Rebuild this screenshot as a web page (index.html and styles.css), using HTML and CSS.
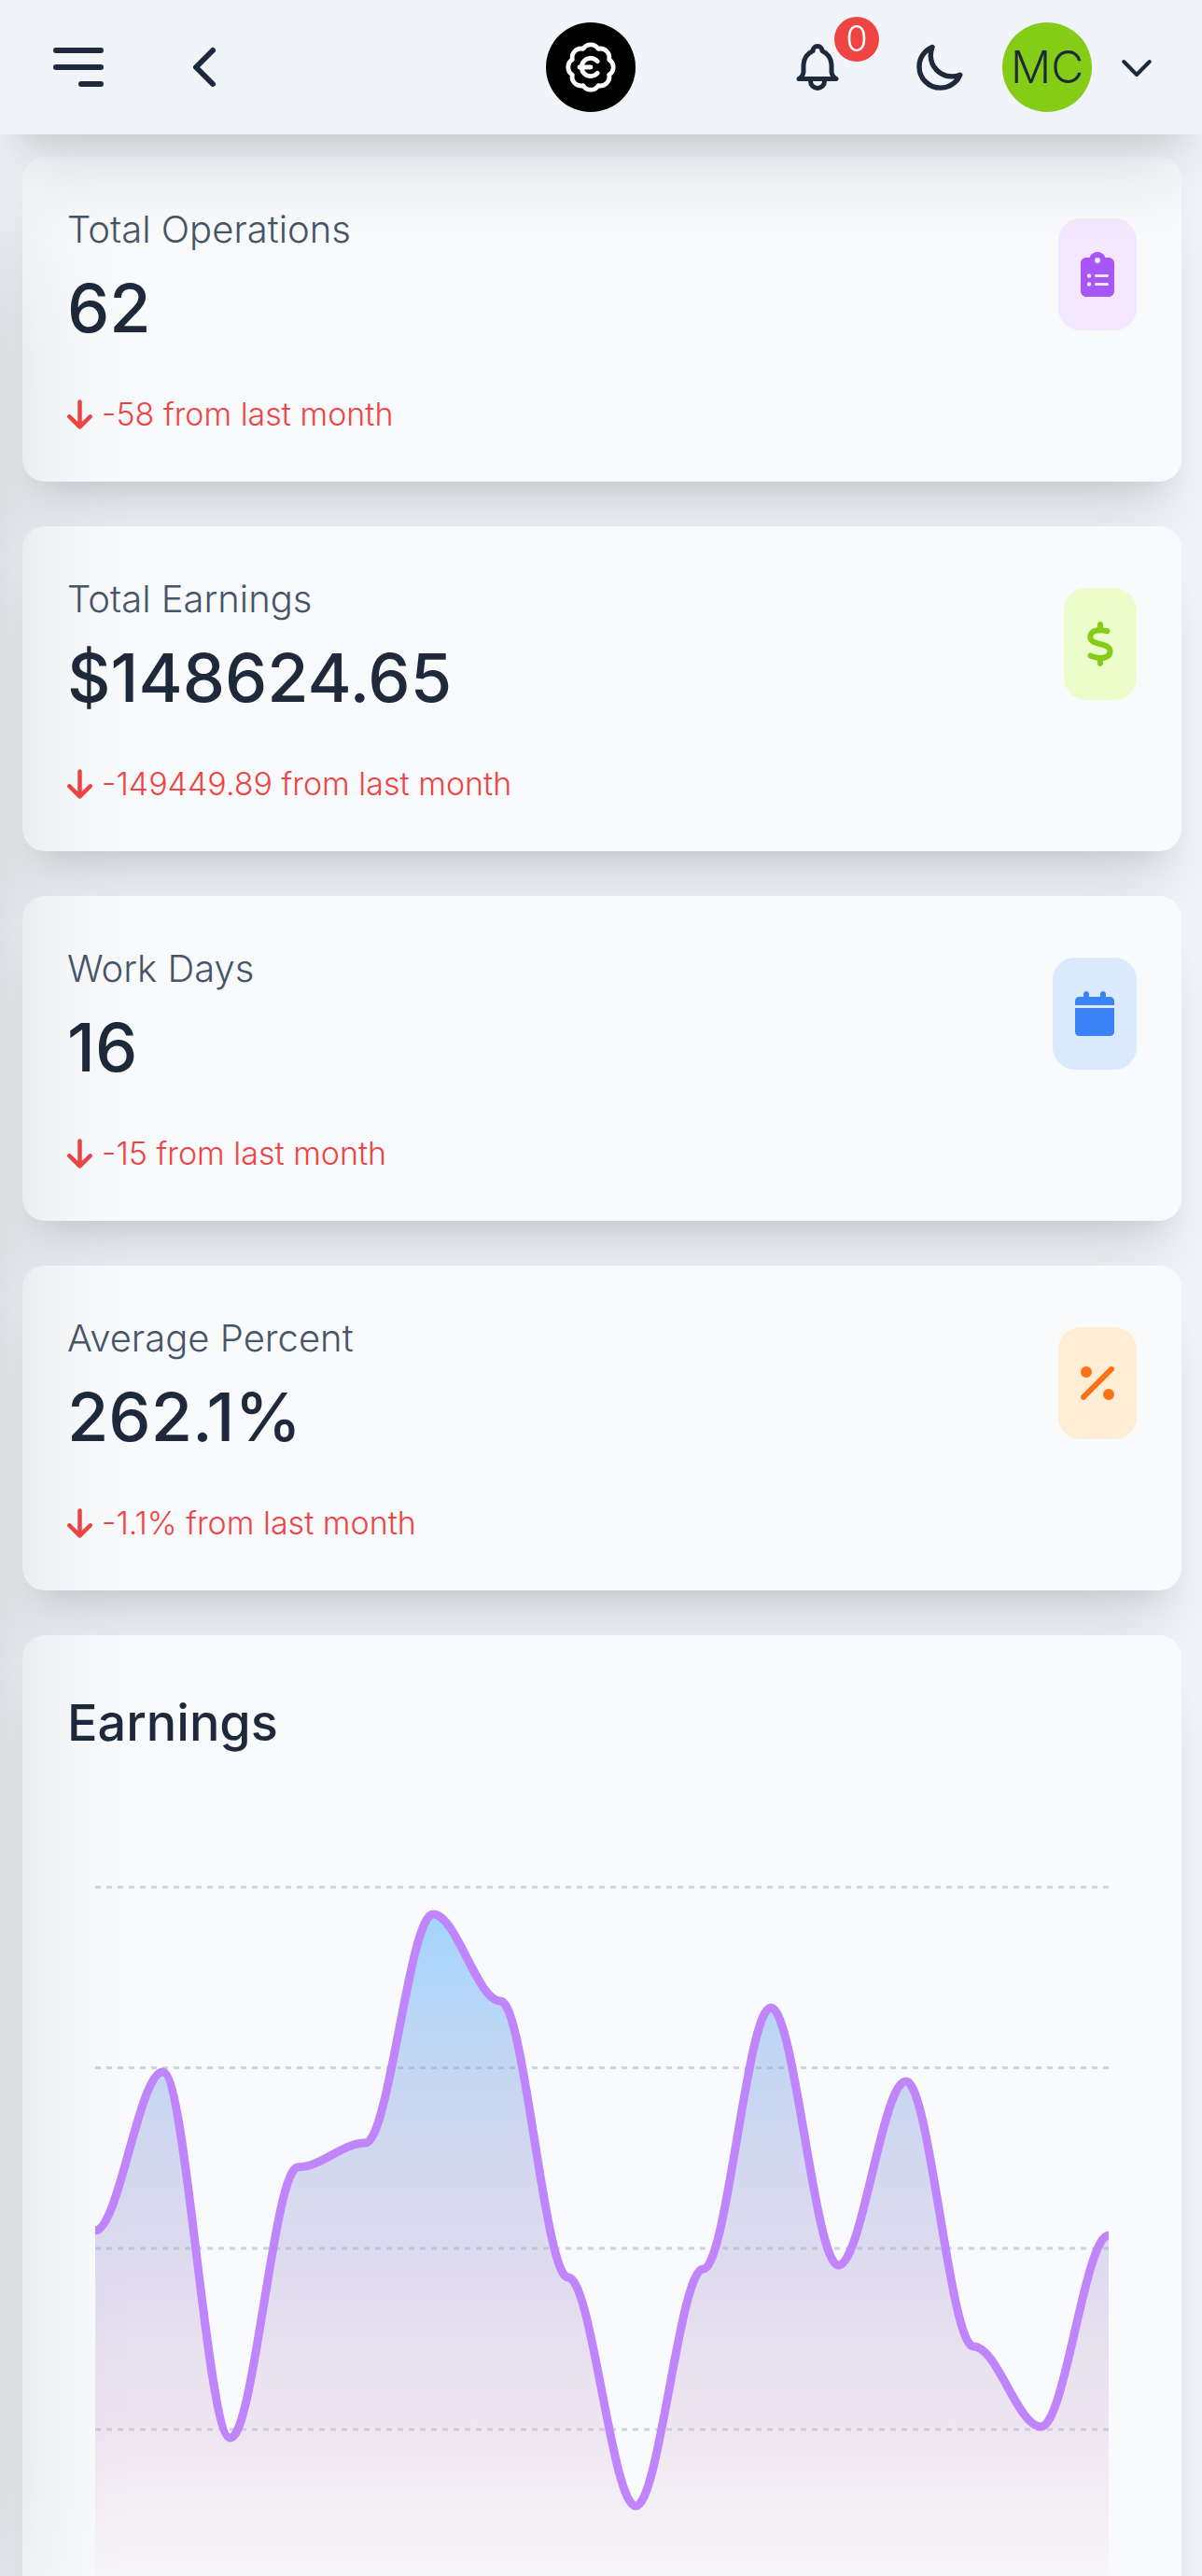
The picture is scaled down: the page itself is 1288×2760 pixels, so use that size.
FILE: index.html
```html
<!DOCTYPE html>
<html lang="en">
<head>
<meta charset="utf-8">
<meta name="viewport" content="width=device-width, initial-scale=1">
<title>Dashboard</title>
<link rel="stylesheet" href="styles.css">
</head>
<body>
<div class="app">
  <header class="topbar">
    <div class="topbar-left">
      <button class="icon-button" type="button" aria-label="Open menu">
        <svg class="icon-72 line" viewBox="0 0 24 24"><path d="M4 6h16M4 12h16M13 18h7"/></svg>
      </button>
      <button class="icon-button" type="button" aria-label="Go back">
        <svg class="icon-72 line" viewBox="0 0 24 24"><path d="M15 6l-6 6l6 6"/></svg>
      </button>
    </div>
    <a class="logo" href="#" aria-label="Home">
      <svg class="icon-58 line" viewBox="0 0 24 24"><path d="M3.85 8.62a4 4 0 0 1 4.78-4.77 4 4 0 0 1 6.74 0 4 4 0 0 1 4.78 4.78 4 4 0 0 1 0 6.74 4 4 0 0 1-4.77 4.78 4 4 0 0 1-6.75 0 4 4 0 0 1-4.78-4.77 4 4 0 0 1 0-6.76Z"/><path d="M7 12h5"/><path d="M15 9.4a4 4 0 1 0 0 5.2"/></svg>
    </a>
    <div class="topbar-right">
      <button class="icon-button bell" type="button" aria-label="Notifications">
        <svg class="icon-60 line" viewBox="0 0 24 24"><path d="M10 5a2 2 0 0 1 4 0a7 7 0 0 1 4 6v3a4 4 0 0 0 2 3h-16a4 4 0 0 0 2-3v-3a7 7 0 0 1 4-6"/><path d="M9 17v1a3 3 0 0 0 6 0v-1"/></svg>
        <span class="badge">0</span>
      </button>
      <button class="icon-button moon" type="button" aria-label="Dark mode">
        <svg class="icon-56 line" viewBox="0 0 24 24"><path d="M21.752 15.502A9.72 9.72 0 0 1 18 16.25c-5.385 0-9.75-4.365-9.75-9.75 0-1.33.266-2.597.748-3.752A9.753 9.753 0 0 0 3 11.75C3 17.135 7.365 21.5 12.75 21.5a9.753 9.753 0 0 0 9.002-5.998Z"/></svg>
      </button>
      <button class="account" type="button" aria-label="Account menu">
        <span class="avatar">MC</span>
        <svg class="icon-48 line" viewBox="0 0 24 24"><path d="M5.1 9l6.900 7l6.900-7"/></svg>
      </button>
    </div>
  </header>
  <aside class="drawer" aria-hidden="true"></aside>
  <main class="content">
    <section class="card stat">
      <div>
        <h2 class="stat-label">Total Operations</h2>
        <p class="stat-value">62</p>
        <p class="stat-change"><svg class="arrow" viewBox="0 0 384 512"><path d="M169.400 470.600c12.500 12.500 32.800 12.500 45.300 0l160-160c12.500-12.500 12.500-32.800 0-45.300s-32.800-12.500-45.300 0L224 370.800V64c0-17.700-14.300-32-32-32s-32 14.300-32 32v306.700L54.600 265.400c-12.500-12.500-32.800-12.500-45.300 0s-12.500 32.800 0 45.300l160 160z"/></svg>-58 from last month</p>
      </div>
      <span class="stat-icon purple"><svg viewBox="0 0 384 512"><path d="M192 0c-41.800 0-77.400 26.700-90.500 64H64C28.700 64 0 92.700 0 128v320c0 35.300 28.700 64 64 64h256c35.300 0 64-28.700 64-64V128c0-35.300-28.700-64-64-64h-37.500C269.400 26.700 233.800 0 192 0zm0 64a32 32 0 1 1 0 64 32 32 0 1 1 0-64zM72 272a24 24 0 1 1 48 0 24 24 0 1 1-48 0zm104-16h128c8.800 0 16 7.200 16 16s-7.200 16-16 16H176c-8.800 0-16-7.200-16-16s7.200-16 16-16zM72 368a24 24 0 1 1 48 0 24 24 0 1 1-48 0zm88 0c0-8.800 7.200-16 16-16h128c8.800 0 16 7.200 16 16s-7.200 16-16 16H176c-8.800 0-16-7.200-16-16z"/></svg></span>
    </section>
    <section class="card stat">
      <div>
        <h2 class="stat-label">Total Earnings</h2>
        <p class="stat-value">$148624.65</p>
        <p class="stat-change"><svg class="arrow" viewBox="0 0 384 512"><path d="M169.400 470.600c12.500 12.500 32.800 12.500 45.300 0l160-160c12.500-12.500 12.500-32.800 0-45.300s-32.800-12.500-45.300 0L224 370.800V64c0-17.700-14.300-32-32-32s-32 14.300-32 32v306.700L54.600 265.400c-12.500-12.500-32.800-12.500-45.300 0s-12.500 32.800 0 45.300l160 160z"/></svg>-149449.89 from last month</p>
      </div>
      <span class="stat-icon lime"><svg viewBox="0 0 320 512"><path d="M160 0c17.700 0 32 14.300 32 32v35.700c1.600.2 3.100.4 4.700.7.400.1.700.1 1.100.2l48 8.800c17.400 3.200 28.900 19.900 25.700 37.200s-19.900 28.900-37.200 25.700l-47.500-8.700c-31.300-4.600-58.900-1.500-78.300 6.200s-27.200 18.300-29 28.100c-2 10.700-.5 16.700 1.200 20.400 1.800 3.900 5.500 8.300 12.800 13.200 16.300 10.700 41.300 17.700 73.700 26.300l2.900.8c28.600 7.600 63.600 16.800 89.600 33.800 14.200 9.300 27.600 21.900 35.900 39.500 8.500 17.900 10.300 37.900 6.400 59.200-6.900 38-33.100 63.400-65.600 76.700-13.700 5.600-28.600 9.200-44.400 11V480c0 17.700-14.300 32-32 32s-32-14.300-32-32v-34.900c-.4-.1-.9-.1-1.300-.2h-.2c-24.400-3.800-64.500-14.300-91.500-26.300-16.100-7.200-23.400-26.100-16.200-42.200s26.100-23.400 42.200-16.200c20.900 9.300 55.300 18.500 75.200 21.600 31.900 4.700 58.200 2 76-5.300 16.900-6.900 24.600-16.900 26.800-28.900 1.900-10.600.4-16.700-1.300-20.400-1.900-4-5.600-8.400-13-13.300-16.400-10.700-41.500-17.700-74-26.300l-2.800-.7c-28.500-7.700-63.500-17-89.500-34-14.200-9.300-27.500-22-35.800-39.600-8.400-17.900-10.100-37.900-6.100-59.200C23.700 116 52.300 91.200 84.800 78.300c13.300-5.300 27.900-8.900 43.200-11V32c0-17.700 14.300-32 32-32z"/></svg></span>
    </section>
    <section class="card stat">
      <div>
        <h2 class="stat-label">Work Days</h2>
        <p class="stat-value">16</p>
        <p class="stat-change"><svg class="arrow" viewBox="0 0 384 512"><path d="M169.400 470.600c12.500 12.500 32.800 12.500 45.300 0l160-160c12.500-12.500 12.500-32.800 0-45.300s-32.800-12.500-45.300 0L224 370.800V64c0-17.700-14.300-32-32-32s-32 14.300-32 32v306.700L54.600 265.400c-12.500-12.500-32.800-12.500-45.300 0s-12.500 32.800 0 45.300l160 160z"/></svg>-15 from last month</p>
      </div>
      <span class="stat-icon blue"><svg viewBox="0 0 448 512"><path d="M96 32v32H48C21.500 64 0 85.500 0 112v48h448v-48c0-26.500-21.500-48-48-48h-48V32c0-17.700-14.300-32-32-32s-32 14.300-32 32v32H160V32c0-17.700-14.300-32-32-32S96 14.300 96 32zm352 160H0v272c0 26.500 21.500 48 48 48h352c26.500 0 48-21.500 48-48V192z"/></svg></span>
    </section>
    <section class="card stat">
      <div>
        <h2 class="stat-label">Average Percent</h2>
        <p class="stat-value">262.1%</p>
        <p class="stat-change"><svg class="arrow" viewBox="0 0 384 512"><path d="M169.400 470.600c12.500 12.500 32.800 12.500 45.300 0l160-160c12.500-12.500 12.500-32.800 0-45.300s-32.800-12.500-45.300 0L224 370.800V64c0-17.700-14.300-32-32-32s-32 14.300-32 32v306.700L54.600 265.400c-12.500-12.500-32.800-12.500-45.300 0s-12.500 32.800 0 45.300l160 160z"/></svg>-1.1% from last month</p>
      </div>
      <span class="stat-icon orange"><svg viewBox="0 0 384 512"><path d="M374.600 118.600c12.500-12.500 12.500-32.800 0-45.300s-32.800-12.500-45.300 0l-320 320c-12.500 12.500-12.500 32.800 0 45.300s32.800 12.500 45.300 0l320-320zM128 128a64 64 0 1 0-128 0 64 64 0 1 0 128 0zm256 256a64 64 0 1 0-128 0 64 64 0 1 0 128 0z"/></svg></span>
    </section>
    <section class="card chart-card">
      <h2 class="chart-title">Earnings</h2>
      <svg class="chart" viewBox="0 0 1086 800" role="img" aria-label="Earnings by day">
        <defs>
          <linearGradient id="area" gradientUnits="userSpaceOnUse" x1="0" y1="41" x2="0" y2="786">
            <stop offset="0" stop-color="rgb(77,176,252)" stop-opacity=".5"/>
            <stop offset=".25" stop-color="rgb(140,172,228)" stop-opacity=".45"/>
            <stop offset=".5" stop-color="rgb(175,161,212)" stop-opacity=".35"/>
            <stop offset=".74" stop-color="rgb(205,170,208)" stop-opacity=".25"/>
            <stop offset="1" stop-color="rgb(240,170,200)" stop-opacity="0"/>
          </linearGradient>
        </defs>
        <path class="grid" d="M0 12H1086M0 205.500H1086M0 399H1086M0 593H1086M0 786.500H1086"/>
        <path id="fill" fill="url(#area)"/>
        <path id="line" class="series"/>
      </svg>
    </section>
  </main>
</div>
<script src="chart.js"></script>
</body>
</html>
```
FILE: styles.css
```css
* { box-sizing: border-box; }
body {
  margin: 0;
  background: #f1f5f9;
  color: #1e293b;
  font-family: Inter, "Liberation Sans", sans-serif;
  font-weight: 300;
}
h2, p { margin: 0; }
button { border: 0; padding: 0; background: none; color: inherit; font: inherit; }
svg { display: block; }

.app { height: 100vh; display: flex; flex-direction: column; overflow: hidden; }

.topbar {
  position: relative;
  z-index: 2;
  flex: none;
  display: grid;
  grid-template-columns: 1fr auto 1fr;
  align-items: center;
  padding: 24px 46px 24px 24px;
  background: #f1f5f9;
  box-shadow: 0 60px 75px -15px rgba(0, 0, 0, .1), 0 24px 30px -18px rgba(0, 0, 0, .1);
}
.topbar-left { display: flex; gap: 15px; }
.topbar-left .icon-button { padding: 0 24px; }
.topbar-right { display: flex; justify-content: flex-end; align-items: center; gap: 24px; }
.line { fill: none; stroke: currentColor; stroke-width: 2; stroke-linecap: round; stroke-linejoin: round; }
.icon-72 { width: 72px; height: 72px; }
.icon-60 { width: 60px; height: 60px; }
.icon-58 { width: 58px; height: 58px; }
.icon-56 { width: 56px; height: 56px; }
.icon-48 { width: 48px; height: 48px; }
.logo {
  display: flex;
  align-items: center;
  justify-content: center;
  width: 96px;
  height: 96px;
  border-radius: 50%;
  background: #000;
  color: #fff;
}
.bell { position: relative; padding: 0 32px; }
.moon { padding: 0 16px; }
.moon .line { stroke-width: 2.3; }
.badge {
  position: absolute;
  top: -24px;
  right: -4px;
  width: 48px;
  height: 48px;
  border-radius: 50%;
  background: #ef4444;
  color: #fff;
  font-size: 38px;
  line-height: 46px;
  text-align: center;
}
.account { display: flex; align-items: center; gap: 24px; }
.avatar {
  width: 96px;
  height: 96px;
  border-radius: 50%;
  background: #84cc16;
  font-size: 48px;
  line-height: 96px;
  text-align: center;
}

/* closed navigation drawer: parked off the left edge, only its shadow shows */
.drawer {
  position: fixed;
  z-index: 1;
  top: 144px;
  bottom: 0;
  right: 100%;
  width: 768px;
  box-shadow: 0 75px 150px -36px rgba(0, 0, 0, .25);
  pointer-events: none;
}

.content {
  flex: 1;
  min-height: 0;
  overflow-y: auto;
  scrollbar-width: none;
  display: flex;
  flex-direction: column;
  gap: 48px;
  padding: 24px 22px 48px 24px;
}
.card {
  flex: none;
  padding: 48px;
  border-radius: 24px;
  background: #f8fafc;
  box-shadow: 0 60px 75px -15px rgba(0, 0, 0, .1), 0 24px 30px -18px rgba(0, 0, 0, .1);
}
.stat { display: flex; justify-content: space-between; align-items: flex-start; }
.stat-label { color: #475569; font-size: 40px; line-height: 60px; font-weight: 300; }
.stat-value { margin-top: 6px; font-size: 72px; line-height: 96px; font-weight: 500; }
.stat-change {
  display: flex;
  align-items: center;
  gap: 10px;
  margin-top: 42px;
  color: #ef4444;
  font-size: 34px;
  line-height: 48px;
}
.arrow { width: 27px; height: 36px; fill: currentColor; }
.stat-icon { margin-top: 18px; padding: 36px 24px; border-radius: 24px; }
.stat-icon svg { height: 48px; fill: currentColor; }
.purple { background: #f3e8ff; color: #a855f7; }
.lime { background: #ecfccb; color: #84cc16; }
.blue { background: #dbeafe; color: #3b82f6; }
.orange { background: #ffedd5; color: #f97316; }

.chart-title { font-size: 54px; line-height: 92px; font-weight: 500; }
.chart { width: 100%; padding: 0 30px; margin-top: 118px; }
.grid { fill: none; stroke: #cbd5e1; stroke-width: 3; stroke-dasharray: 6 6; }
.series { fill: none; stroke: #c084fc; stroke-width: 9; }
```
FILE: chart.js
```js
const values = [380, 210, 602, 312, 286, 41, 134, 430, 675, 421, 141, 417, 220, 504, 590, 385];
const step = 1086 / (values.length - 1);
const bend = step * 0.35;
let d = `M0 ${values[0]}`;
for (let i = 1; i < values.length; i++) {
  const x = i * step;
  d += `C${x - step + bend} ${values[i - 1]} ${x - bend} ${values[i]} ${x} ${values[i]}`;
}
document.getElementById('line').setAttribute('d', d);
document.getElementById('fill').setAttribute('d', `${d}V786H0Z`);
```
